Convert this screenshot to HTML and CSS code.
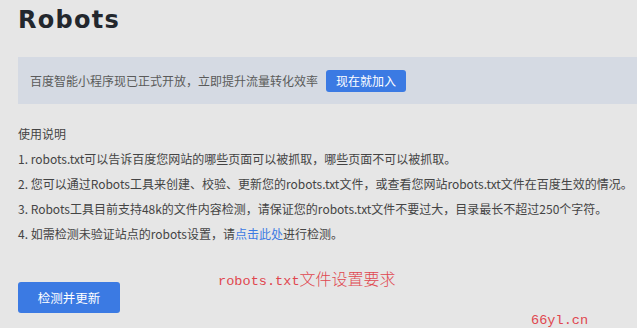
FILE: index.html
```html
<!DOCTYPE html>
<html lang="zh-CN">
<head>
<meta charset="utf-8">
<link rel="stylesheet" href="styles.css">
</head>
<body>
<div class="page">
  <h1 class="title">Robots</h1>
  <div class="banner">
    <span class="banner-text">百度智能小程序现已正式开放，立即提升流量转化效率</span>
    <a class="btn-small">现在就加入</a>
  </div>
  <div class="guide">
    <p class="guide-head">使用说明</p>
    <p class="guide-item">1. robots.txt可以告诉百度您网站的哪些页面可以被抓取，哪些页面不可以被抓取。</p>
    <p class="guide-item">2. 您可以通过Robots工具来创建、校验、更新您的robots.txt文件，或查看您网站robots.txt文件在百度生效的情况。</p>
    <p class="guide-item">3. Robots工具目前支持48k的文件内容检测，请保证您的robots.txt文件不要过大，目录最长不超过250个字符。</p>
    <p class="guide-item">4. 如需检测未验证站点的robots设置，请<a class="link">点击此处</a>进行检测。</p>
  </div>
  <a class="btn-main">检测并更新</a>
</div>
<div class="watermark wm-title"><span class="wm-latin">robots.txt</span><span class="wm-cjk">文件设置要求</span></div>
<div class="watermark wm-site"><span class="wm-latin">66yl.cn</span></div>
</body>
</html>
```
FILE: styles.css
```css
html, body {
  margin: 0;
  padding: 0;
  background: #e6e6e6;
}
body {
  width: 637px;
  height: 328px;
  overflow: hidden;
  position: relative;
  font-family: "Noto Sans CJK SC", "Noto Sans", sans-serif;
  color: #444;
}
.page {
  padding-left: 18px;
}
.title {
  margin: 0;
  padding-top: 5px;
  height: 52px;
  font-family: "DejaVu Sans", sans-serif;
  font-weight: bold;
  font-size: 24px;
  line-height: 30px;
  letter-spacing: 1.3px;
  color: #23272d;
}
.banner {
  height: 47px;
  background: #d5dae3;
  display: flex;
  align-items: center;
  padding-left: 12px;
  gap: 8px;
}
.banner-text {
  font-size: 12px;
  color: #5a5a5a;
}
.btn-small {
  display: inline-flex;
  align-items: center;
  justify-content: center;
  width: 80px;
  height: 22px;
  border-radius: 3px;
  background: #3b7ae3;
  color: #fff;
  font-size: 12px;
}
.guide {
  padding-top: 17px;
}
.guide p {
  margin: 0;
  font-size: 12px;
  line-height: 25px;
  height: 25px;
  white-space: nowrap;
}
.guide-head {
  color: #444;
}
.link {
  color: #3b7ae3;
}
.btn-main {
  margin-top: 36px;
  display: flex;
  align-items: center;
  justify-content: center;
  width: 102px;
  height: 31px;
  border-radius: 3px;
  background: #3b7ae3;
  color: #fff;
  font-size: 12.5px;
}
.watermark {
  position: absolute;
  color: #e0464f;
  white-space: nowrap;
  line-height: 20px;
}
.wm-latin {
  font-family: "Liberation Mono", monospace;
  font-size: 13.6px;
}
.wm-cjk {
  font-family: "Noto Sans CJK SC", sans-serif;
  font-size: 16px;
  font-weight: 300;
}
.wm-title {
  left: 218px;
  top: 268px;
}
.wm-site {
  left: 531px;
  top: 307px;
}
```
